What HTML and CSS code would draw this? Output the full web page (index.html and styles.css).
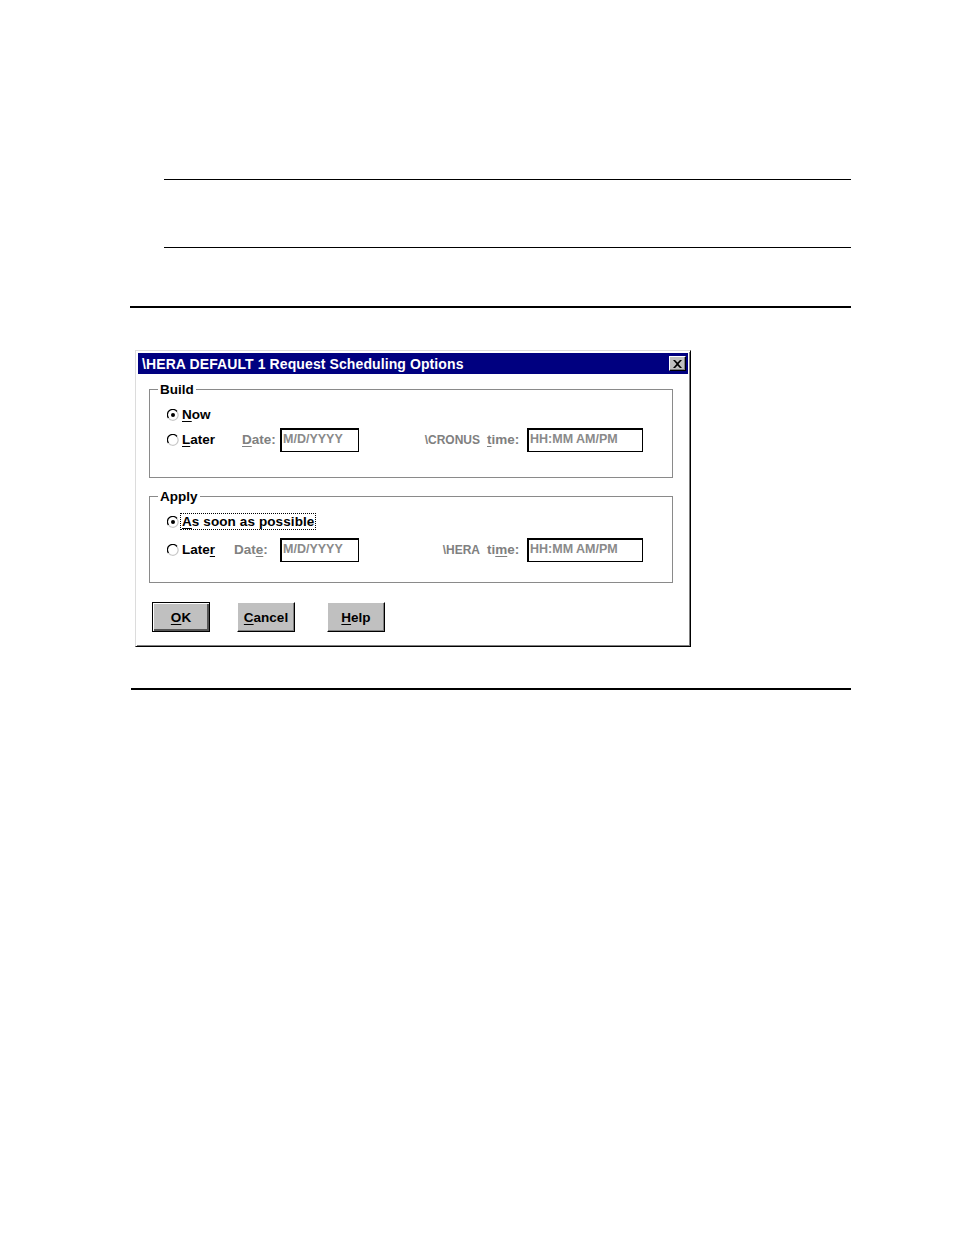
FILE: index.html
```html
<!DOCTYPE html>
<html>
<head>
<meta charset="utf-8">
<link rel="stylesheet" href="styles.css">
</head>
<body>
<div class="page">
  <div class="rule-thin"></div>
  <div class="rule-thin second"></div>
  <div class="rule-thick first"></div>

  <div class="dialog">
    <div class="titlebar">
      <span class="title">\HERA DEFAULT 1 Request Scheduling Options</span>
      <span class="close-btn">
        <svg width="9" height="8" viewBox="0 0 9 8"><path d="M0 0h2l2.5 2.5L7 0h2L5.5 4 9 8H7L4.5 5.5 2 8H0l3.5-4z" fill="#000"/></svg>
      </span>
    </div>
    <div class="body">
      <div class="group build">
        <span class="legend">Build</span>
        <div class="row">
          <div class="choice wide">
            <span class="radio checked"><svg width="12" height="12" viewBox="0 0 12 12"><path d="M10 2.5A5 5 0 0 0 1.5 9" fill="none" stroke="#000" stroke-width="1.3"/><path d="M1.8 9.3A5 5 0 0 0 10 2.8" fill="none" stroke="#c8c8c8" stroke-width="1.2"/><circle cx="6" cy="6" r="2" fill="#000"/></svg></span>
            <span class="label"><u>N</u>ow</span>
          </div>
        </div>
        <div class="row">
          <div class="choice">
            <span class="radio"><svg width="12" height="12" viewBox="0 0 12 12"><path d="M10 2.5A5 5 0 0 0 1.5 9" fill="none" stroke="#000" stroke-width="1.3"/><path d="M1.8 9.3A5 5 0 0 0 10 2.8" fill="none" stroke="#c8c8c8" stroke-width="1.2"/></svg></span>
            <span class="label"><u>L</u>ater</span>
          </div>
          <span class="date-label"><u>D</u>ate:</span>
          <span class="field date">M/D/YYYY</span>
          <span class="host">\CRONUS</span>
          <span class="time-label"><u>t</u>ime:</span>
          <span class="field time">HH:MM AM/PM</span>
        </div>
      </div>

      <div class="group apply">
        <span class="legend">Apply</span>
        <div class="row">
          <div class="choice wide">
            <span class="radio checked"><svg width="12" height="12" viewBox="0 0 12 12"><path d="M10 2.5A5 5 0 0 0 1.5 9" fill="none" stroke="#000" stroke-width="1.3"/><path d="M1.8 9.3A5 5 0 0 0 10 2.8" fill="none" stroke="#c8c8c8" stroke-width="1.2"/><circle cx="6" cy="6" r="2" fill="#000"/></svg></span>
            <span class="label focus"><u>A</u>s soon as possible</span>
          </div>
        </div>
        <div class="row">
          <div class="choice">
            <span class="radio"><svg width="12" height="12" viewBox="0 0 12 12"><path d="M10 2.5A5 5 0 0 0 1.5 9" fill="none" stroke="#000" stroke-width="1.3"/><path d="M1.8 9.3A5 5 0 0 0 10 2.8" fill="none" stroke="#c8c8c8" stroke-width="1.2"/></svg></span>
            <span class="label">Late<u>r</u></span>
          </div>
          <span class="date-label">Dat<u>e</u>:</span>
          <span class="field date">M/D/YYYY</span>
          <span class="host">\HERA</span>
          <span class="time-label">ti<u>m</u>e:</span>
          <span class="field time">HH:MM AM/PM</span>
        </div>
      </div>

      <div class="buttons">
        <span class="btn default ok"><u>O</u>K</span>
        <span class="btn cancel"><u>C</u>ancel</span>
        <span class="btn help"><u>H</u>elp</span>
      </div>
    </div>
  </div>

  <div class="rule-thick last"></div>
</div>
</body>
</html>
```

FILE: styles.css
```css
html, body {
  margin: 0;
  padding: 0;
  background: #fff;
}

.page {
  padding-top: 179px;
  font-family: "Liberation Sans", Arial, sans-serif;
  font-weight: bold;
  font-size: 13.5px;
  color: #000;
}

.rule-thin {
  margin-left: 164px;
  width: 687px;
  height: 1px;
  background: #000;
}

.rule-thin.second {
  margin-top: 67px;
}

.rule-thick {
  margin-left: 130px;
  width: 721px;
  height: 2px;
  background: #000;
}

.rule-thick.first {
  margin-top: 58px;
}

.rule-thick.last {
  margin-top: 41px;
  margin-left: 131px;
  width: 720px;
}

.dialog {
  margin-top: 42px;
  margin-left: 135px;
  width: 556px;
  height: 297px;
  box-sizing: border-box;
  border-top: 1px solid #dcdcdc;
  border-left: 1px solid #dcdcdc;
  border-right: 1px solid #000;
  border-bottom: 1px solid #000;
  box-shadow: inset 1px 1px #fff, inset -1px -1px #808080;
  padding: 2px;
  background: #fff;
}

.titlebar {
  height: 21px;
  background: #000080;
  display: flex;
  align-items: center;
  justify-content: space-between;
  padding: 0 2px 0 4px;
}

.title {
  color: #fff;
  font-size: 14px;
  letter-spacing: 0.1px;
}

.close-btn {
  width: 17px;
  height: 15px;
  box-sizing: border-box;
  background: #c0c0c0;
  border-top: 1px solid #fff;
  border-left: 1px solid #fff;
  border-right: 1px solid #000;
  border-bottom: 1px solid #000;
  box-shadow: inset -1px -1px #808080;
  display: flex;
  align-items: center;
  justify-content: center;
}

.body {
  padding: 15px 0 0 11px;
}

.group {
  position: relative;
  width: 524px;
  box-sizing: border-box;
  border: 1px solid #8a8a8a;
}

.group.build {
  height: 89px;
  padding: 12px 0 0 17px;
}

.group.apply {
  margin-top: 18px;
  height: 87px;
  padding: 12px 0 0 17px;
}

.legend {
  position: absolute;
  top: -8px;
  left: 8px;
  padding: 0 2px;
  background: #fff;
  line-height: 16px;
}

.row {
  display: flex;
  align-items: center;
  height: 25px;
}

.apply .row + .row {
  margin-top: 3px;
}

.choice {
  display: flex;
  align-items: center;
  width: 75px;
  white-space: nowrap;
}

.apply .choice {
  width: 67px;
}

.choice.wide,
.apply .choice.wide {
  width: auto;
}

.radio {
  width: 12px;
  height: 12px;
  margin-right: 3px;
  display: flex;
}

.label u,
.date-label u,
.time-label u,
.btn u {
  text-underline-offset: 2px;
}

.label.focus {
  outline: 1px dotted #000;
  outline-offset: 0;
  padding: 0 1px;
  margin-left: -1px;
  line-height: 15px;
  letter-spacing: 0.1px;
}

.date-label {
  width: 38px;
  color: #808080;
}

.apply .date-label {
  width: 46px;
}

.field {
  height: 24px;
  box-sizing: border-box;
  border: 1px solid #000;
  border-top-width: 2px;
  border-left-width: 2px;
  color: #8a8a8a;
  padding: 1px 0 0 1px;
  line-height: 16px;
  font-size: 12.5px;
  align-self: center;
}

.field.date {
  width: 79px;
}

.field.time {
  width: 116px;
}

.host {
  width: 121px;
  text-align: right;
  padding-right: 7px;
  color: #808080;
  font-size: 12px;
}

.time-label {
  width: 40px;
  color: #808080;
}

.buttons {
  display: flex;
  margin-top: 19px;
  padding-left: 3px;
}

.btn {
  width: 58px;
  height: 30px;
  box-sizing: border-box;
  background: #c0c0c0;
  border-top: 1px solid #fff;
  border-left: 1px solid #fff;
  border-right: 1px solid #000;
  border-bottom: 1px solid #000;
  box-shadow: inset -1px -1px #808080;
  display: flex;
  align-items: center;
  justify-content: center;
}

.btn.default {
  border: 1px solid #000;
  box-shadow: inset 1px 1px #fff, inset -2px -2px #555;
}

.btn.cancel {
  margin-left: 27px;
}

.btn.help {
  margin-left: 32px;
}
```
